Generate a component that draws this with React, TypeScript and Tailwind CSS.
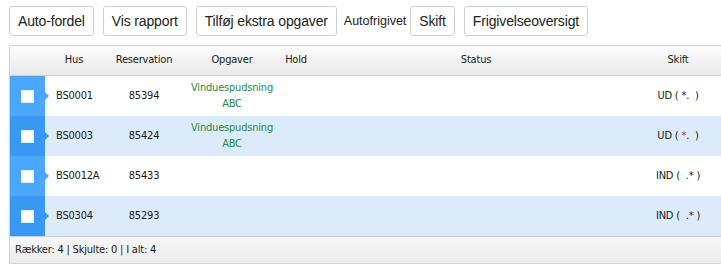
import React from "react";

type Row = {
  hus: string;
  res: string;
  opgaver: boolean;
  skift: React.ReactNode;
};

const rows: Row[] = [
  { hus: "BS0001", res: "85394", opgaver: true, skift: <>UD ( *.&nbsp; )</> },
  {
    hus: "BS0003",
    res: "85424",
    opgaver: true,
    skift: (
      <>
        UD ( <span className="text-[#e0261f]">*</span>.&nbsp; )
      </>
    ),
  },
  { hus: "BS0012A", res: "85433", opgaver: false, skift: <>IND (&nbsp; .* )</> },
  { hus: "BS0304", res: "85293", opgaver: false, skift: <>IND (&nbsp; .* )</> },
];

const cols = "grid grid-cols-[35px_58px_82px_94px_34px_1fr_78px] pr-[4px]";

function Btn({ children }: { children: React.ReactNode }) {
  return (
    <button className="h-[30px] px-[8px] bg-white border border-[#cfcfcf] rounded-[3px] text-[14px] text-[#222] leading-none tracking-[-0.15px]">
      {children}
    </button>
  );
}

export default function App() {
  return (
    <div className="w-[721px] h-[267px] bg-white overflow-hidden font-['Liberation_Sans',Arial,sans-serif]">
      <div className="flex items-center gap-[9px] pt-[6px] pl-[9px]">
        <Btn>Auto-fordel</Btn>
        <Btn>Vis rapport</Btn>
        <Btn>Tilføj ekstra opgaver</Btn>
        <span className="text-[12.5px] text-[#222] -ml-[2px] -mr-[5px]">Autofrigivet</span>
        <Btn>Skift</Btn>
        <Btn>Frigivelseoversigt</Btn>
      </div>

      <div className="mt-[9px] ml-[9px] border-l border-t border-b border-[#d4d4d4] text-[11px] text-[#1a1a1a] font-['DejaVu_Sans_Condensed','DejaVu_Sans',sans-serif] tracking-[-0.2px]">
        <div className={`${cols} h-[30px] items-center bg-gradient-to-b from-[#fdfdfd] to-[#e9e9e9] border-b border-[#cfcfcf]`}>
          <div />
          <div className="text-center">Hus</div>
          <div className="text-center">Reservation</div>
          <div className="text-center">Opgaver</div>
          <div className="text-center">Hold</div>
          <div className="text-center">Status</div>
          <div className="text-center">Skift</div>
        </div>

        {rows.map((r, i) => {
          const even = i % 2 === 1;
          const blue = even ? "bg-[#3898f4]" : "bg-[#4aa7fc]";
          return (
            <div
              key={r.hus}
              className={`${cols} h-[40px] items-center ${even ? "bg-[#dcebf9]" : "bg-white"}`}
            >
              <div className={`relative h-full flex items-center justify-center ${blue}`}>
                <span className="w-[13px] h-[13px] bg-white border border-[#e6f0fb]" />
                <span
                  className={`absolute -right-[4px] top-1/2 -translate-y-1/2 w-0 h-0 border-y-[4px] border-y-transparent border-l-[4px] ${
                    even ? "border-l-[#3898f4]" : "border-l-[#4aa7fc]"
                  }`}
                />
              </div>
              <div className="pl-[11px]">{r.hus}</div>
              <div className="text-center">{r.res}</div>
              <div className="text-center text-[#1f8a4c] leading-[16px]">
                {r.opgaver && (
                  <>
                    <div>Vinduespudsning</div>
                    <div>ABC</div>
                  </>
                )}
              </div>
              <div />
              <div />
              <div className="text-center whitespace-pre">{r.skift}</div>
            </div>
          );
        })}

        <div className="h-[27px] flex items-center px-[5px] pt-[1px] bg-gradient-to-b from-[#f7f7f7] to-[#ececec] border-t border-[#d0d0d0]">
          Rækker: 4 | Skjulte: 0 | I alt: 4
        </div>
      </div>
    </div>
  );
}
